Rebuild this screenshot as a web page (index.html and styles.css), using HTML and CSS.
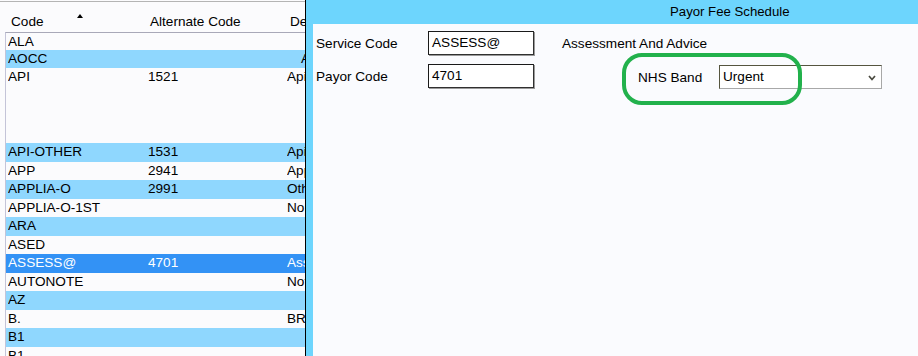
FILE: index.html
```html
<!DOCTYPE html>
<html>
<head>
<meta charset="utf-8">
<link rel="stylesheet" href="styles.css">
</head>
<body>
<div class="app">
  <div class="left">
    <div class="head">
      <div class="hcell hcode"><span>Code</span><span class="sort"></span></div>
      <div class="hcell halt">Alternate Code</div>
      <div class="hcell hdesc">Description</div>
    </div>
    <div class="list">
      <div class="row r17"><span>ALA</span><span></span><span></span></div>
      <div class="row r18 hl"><span>AOCC</span><span></span><span class="shift">AOCC Description</span></div>
      <div class="row tall"><span>API</span><span>1521</span><span>Apicectomy</span></div>
      <div class="row hl"><span>API-OTHER</span><span>1531</span><span>Apicectomy Other</span></div>
      <div class="row"><span>APP</span><span>2941</span><span>Appliance</span></div>
      <div class="row hl"><span>APPLIA-O</span><span>2991</span><span>Other Appliance</span></div>
      <div class="row"><span>APPLIA-O-1ST</span><span></span><span>Non Standard</span></div>
      <div class="row hl"><span>ARA</span><span></span><span></span></div>
      <div class="row"><span>ASED</span><span></span><span></span></div>
      <div class="row sel"><span>ASSESS@</span><span>4701</span><span>Assessment And Advice</span></div>
      <div class="row"><span>AUTONOTE</span><span></span><span>Notes</span></div>
      <div class="row hl"><span>AZ</span><span></span><span></span></div>
      <div class="row"><span>B.</span><span></span><span>BRIDGE</span></div>
      <div class="row hl"><span>B1</span><span></span><span></span></div>
      <div class="row"><span>B1</span><span></span><span></span></div>
    </div>
  </div>
  <div class="dialog">
    <div class="title">Payor Fee Schedule</div>
    <div class="content">
      <div class="frow">
        <div class="label">Service Code</div>
        <div class="field">ASSESS@</div>
        <div class="desc">Assessment And Advice</div>
      </div>
      <div class="frow">
        <div class="label">Payor Code</div>
        <div class="field">4701</div>
        <div class="label nhs">NHS Band</div>
        <div class="select">
          <span>Urgent</span>
          <svg class="chev" width="8" height="6" viewBox="0 0 8 6"><path d="M1 1 L4 4.5 L7 1" fill="none" stroke="#4a4a40" stroke-width="1.7"/></svg>
        </div>
      </div>
      <div class="mark"></div>
    </div>
  </div>
</div>
</body>
</html>
```

FILE: styles.css
```css
html, body {
  margin: 0;
  padding: 0;
}
body {
  width: 918px;
  height: 356px;
  overflow: hidden;
  font-family: "Liberation Sans", Arial, sans-serif;
  font-size: 13.6px;
  color: #000;
  background: #fbfbfd;
}
.app {
  display: flex;
  height: 356px;
}
.left {
  flex: none;
  width: 305px;
  overflow: hidden;
  padding-top: 1px;
  background: #fbfbfd;
}
.head {
  border-top: 1px solid #b4b4b4;
  height: 30px;
  display: flex;
  white-space: nowrap;
}
.hcell {
  flex: none;
  padding-top: 11px;
  line-height: 18px;
}
.hcode {
  width: 139px;
  padding-left: 11px;
  display: flex;
  align-items: flex-start;
}
.sort {
  margin-left: 33px;
  margin-top: 1px;
  width: 0;
  height: 0;
  border-left: 3px solid transparent;
  border-right: 3px solid transparent;
  border-bottom: 4px solid #000;
}
.halt {
  width: 140px;
}
.list {
  margin-left: 5px;
  border-left: 1px solid #c4c4d8;
  border-top: 1px solid #a8a8b8;
  height: 400px;
}
.row {
  display: grid;
  grid-template-columns: 140px 139px 1fr;
  padding-left: 2px;
  height: 18.55px;
  line-height: 18px;
  white-space: nowrap;
  overflow: hidden;
  background: #fbfbfd;
}
.row span {
  overflow: hidden;
}
.row.r17 { height: 17px; line-height: 17px; }
.row.r18 { height: 18px; }
.row.tall { height: 75px; }
.row.hl { background: #8fd7fe; }
.row.sel { background: #3392f5; color: #fff; }
.shift { padding-left: 14px; }

.dialog {
  flex: 1;
  border-left: 1px solid #000;
  background: #6dd5fd;
  display: flex;
  flex-direction: column;
  min-width: 0;
}
.title {
  height: 24px;
  line-height: 23px;
  font-size: 13.2px;
  padding-left: 364px;
  white-space: nowrap;
}
.content {
  flex: 1;
  margin-left: 7px;
  background: #fafbfe;
  position: relative;
  padding: 7px 0 0 3px;
}
.frow {
  display: flex;
  align-items: flex-start;
  height: 24px;
  margin-bottom: 9px;
  white-space: nowrap;
}
.label {
  flex: none;
  width: 112px;
  line-height: 26px;
}
.field {
  flex: none;
  box-sizing: border-box;
  width: 106px;
  height: 24px;
  border: 1px solid #1a1a1a;
  border-right-color: #303030;
  border-bottom-color: #303030;
  box-shadow: 1px 1px 0 #9a9a9a;
  background: #fff;
  padding-left: 3px;
  line-height: 22px;
}
.desc {
  flex: none;
  margin-left: 28px;
  line-height: 26px;
}
.nhs {
  width: 81px;
  margin-left: 104px;
  margin-top: 1px;
}
.select {
  flex: none;
  box-sizing: border-box;
  width: 163px;
  height: 24px;
  margin-top: 1px;
  border: 1px solid #55553f;
  border-right-color: #a8a8a8;
  border-bottom-color: #a8a8a8;
  background: #fff;
  display: flex;
  align-items: center;
  padding-left: 3px;
  padding-right: 5px;
}
.select span {
  flex: 1;
  line-height: 22px;
}
.chev {
  display: block;
  margin-top: 1px;
}
.mark {
  position: absolute;
  left: 309px;
  top: 29px;
  width: 180px;
  height: 52px;
  box-sizing: border-box;
  border: 4px solid #22b14c;
  border-radius: 20px;
}
```
